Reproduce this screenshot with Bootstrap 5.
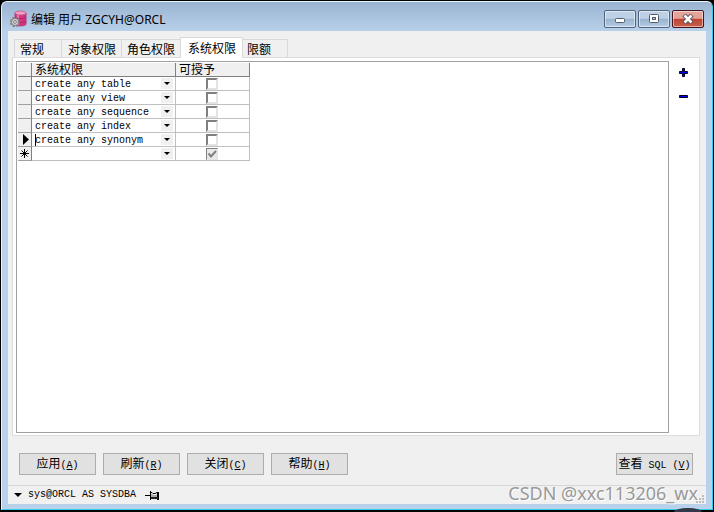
<!DOCTYPE html>
<html lang="zh-CN">
<head>
<meta charset="utf-8">
<meta name="viewport" content="width=device-width, initial-scale=1">
<title>编辑 用户 ZGCYH@ORCL</title>
<link href="https://cdn.jsdelivr.net/npm/bootstrap@5.3.0/dist/css/bootstrap.min.css" rel="stylesheet">
<style>
body{background:#000;color:#000;font:12px/14px "Liberation Sans","Noto Sans CJK SC",sans-serif}
button,select,input{font:inherit;color:#000}
.mono{font-family:"Liberation Mono",monospace;font-size:10px}
.window{margin:1px 1px 2px 1px;border:1px solid #e8f4fc;border-right-color:#32cdec;border-bottom-color:#32cdec;border-radius:6px 6px 0 0;background:linear-gradient(#9ab3d1,#b9d1ea 30px,#b9d1ea);padding:0 6px 5px}
.titlebar{height:29px;padding:4px 2px 0 2px}
.title-text{font:12px/16px "Noto Sans","Noto Sans CJK SC",sans-serif;padding-top:2px}
.win-buttons{gap:2px}
.win-btn{width:32px;height:18px;border:1px solid #52657d;border-radius:2px;box-shadow:inset 0 0 0 1px #ffffff80;background:linear-gradient(#bdd0e6 46%,#98b3d0 50%,#b5cce4)}
.win-close{border-color:#431422;background:linear-gradient(#e3a398 46%,#bd432f 50%,#c9604a)}
.client{background:#f0f0f0}
.tabs{padding:6px 0 0 6px;height:26px}
.tab{background:#f0f0f0;border:1px solid #d9d9d9;border-left-width:0;border-bottom:0;height:18px;padding:2px 5px 0 6px;line-height:16px;white-space:nowrap}
.tab.first{border-left-width:1px;padding:2px 17px 0 5px}
.tab.last{padding:2px 16px 0 4px}
.tab.narrow{padding-left:5px}
.tab.current{height:21px;background:#fff;border-left-width:1px;margin:0 0 -1px -1px;padding:2px 6px 0 7px;position:relative;z-index:1}
.panel{border:1px solid #dcdcdc;background:#fff;margin:0 6px 0 4px;padding:3px 0 2px 3px}
.grid-box{border:1px solid #a0a0a5;padding:1px}
.side{width:30px;padding:0 0 0 10px}
.side button{height:24px;width:14px}
.bare{border:0;background:none;padding:0}
.grid{border-collapse:separate;border-spacing:0;table-layout:fixed;width:232px}
.grid th,.grid td{height:14px;padding:0;border:solid #c0c0c0;border-width:0 1px 1px 0;font-weight:400;line-height:13px;overflow:hidden}
.grid .head th{border-color:#808080;background:#f0f0f0;padding:1px 0 0 3px;line-height:12px}
.grid .marker{background:#f0f0f0;border-right-color:#808080;border-bottom-color:#a0a0a0}
.grid svg{display:block}
.cell{padding-left:3px}
.combo{appearance:none;border:0;background:#fff;padding:2px 0 0;height:13px;line-height:11px;outline:0;min-width:0}
.drop{width:12px;height:11px;background:#f0f0f0;margin-right:2px}
.caret{width:1px;height:12px;background:#000;margin-right:-1px;z-index:1}
.check{appearance:none;display:block;margin:0 0 0 30px;width:12px;height:12px;border:2px solid;border-color:#808080 #e3e3e3 #e3e3e3 #808080;background:#fff}
.check:checked{border-width:1px;background:url("data:image/svg+xml,%3Csvg xmlns='http://www.w3.org/2000/svg' viewBox='0 0 10 10'%3E%3Crect width='10' height='10' fill='%23e8e8e8'/%3E%3Cpath d='M1.5 4.5 4 7.5 9 2' fill='none' stroke='%23808080' stroke-width='2'/%3E%3C/svg%3E")}
.actions{padding:17px 13px 10px 11px;gap:7px}
.act{width:77px;height:22px;border:1px solid #adadad;background:#e1e1e1;white-space:nowrap;padding:1px 0 0;line-height:19px}
.status{border-top:1px solid #d7d7d7;height:19px;padding-left:6px}
.status .mono{margin-left:2px}
.watermark{right:16px;bottom:9px;font:18px/20px "Noto Sans",sans-serif;color:#999;text-shadow:1px 1px 0 #fff;pointer-events:none}
.bubble{right:12px;bottom:0;width:28px;height:4px;border-radius:14px 14px 0 0/4px 4px 0 0;background:#30384a}
</style>
<script defer src="https://cdn.jsdelivr.net/npm/bootstrap@5.3.0/dist/js/bootstrap.bundle.min.js"></script>
</head>
<body class="vh-100 overflow-hidden d-flex flex-column position-relative">
<main class="window flex-grow-1 d-flex flex-column">
  <header class="titlebar d-flex align-items-center">
    <svg width="17" height="18" viewBox="0 0 17 18" class="me-1" aria-hidden="true">
      <path d="M5 3v11c0 2.500 11 2.500 11 0V3" fill="#d2347f" stroke="#b83574"/>
      <path d="M8 5v10" stroke="#f07fb0" stroke-width="2"/>
      <path d="M5 7c1 2 10 2 11 0M5 11c1 2 10 2 11 0" fill="none" stroke="#b3266a"/>
      <ellipse cx="10.500" cy="3" rx="5.500" ry="2" fill="#f0a0c4" stroke="#c95a8e"/>
      <circle cx="5" cy="12" r="4.300" fill="none" stroke="#777" stroke-width="1.500" stroke-dasharray="2 1.400"/>
      <circle cx="5" cy="12" r="3.500" fill="#d8d8d8" stroke="#808080"/><circle cx="5" cy="12" r="1.400" fill="#fff" stroke="#777"/>
    </svg>
    <h1 class="title-text m-0 me-auto">编辑 用户 ZGCYH@ORCL</h1>
    <div class="win-buttons d-flex">
      <button class="win-btn p-0 d-flex align-items-center justify-content-center" aria-label="最小化"><svg width="12" height="10"><rect x="1.5" y="4.500" width="9" height="4" rx="1" fill="#fff" stroke="#555c6b"/></svg></button>
      <button class="win-btn p-0 d-flex align-items-center justify-content-center" aria-label="最大化"><svg width="12" height="10"><rect x="1.500" y=".5" width="9" height="8" rx="1" fill="#fff" stroke="#555c6b"/><rect x="4.500" y="3.500" width="3" height="2" fill="#aec3dc" stroke="#555c6b"/></svg></button>
      <button class="win-btn win-close p-0 d-flex align-items-center justify-content-center" aria-label="关闭窗口"><svg width="12" height="10"><path d="M2 1 10 9M10 1 2 9" stroke="#59505b" stroke-width="4.500"/><path d="M2.500 1.500 9.500 8.500M9.500 1.500 2.500 8.500" stroke="#fff" stroke-width="2.500"/></svg></button>
    </div>
  </header>
  <div class="client flex-grow-1 d-flex flex-column">
    <div class="tabs d-flex align-items-end" role="tablist">
      <button class="tab first" role="tab">常规</button>
      <button class="tab" role="tab">对象权限</button>
      <button class="tab narrow" role="tab">角色权限</button>
      <button class="tab current" role="tab" aria-selected="true">系统权限</button>
      <button class="tab last" role="tab">限额</button>
    </div>
    <section class="panel flex-grow-1 d-flex">
      <div class="grid-box flex-grow-1">
        <table class="grid">
          <colgroup><col style="width:14px"><col style="width:144px"><col style="width:74px"></colgroup>
          <thead><tr class="head"><th></th><th>系统权限</th><th>可授予</th></tr></thead>
          <tbody>
            <tr><td class="marker"></td><td><div class="cell d-flex align-items-center"><select class="combo mono flex-grow-1" aria-label="系统权限 1"><option>create any table</option></select><svg class="drop" viewBox="0 0 12 11"><path d="M3 4h6L6 7z"/></svg></div></td><td><input type="checkbox" class="check" aria-label="可授予 1"></td></tr>
            <tr><td class="marker"></td><td><div class="cell d-flex align-items-center"><select class="combo mono flex-grow-1" aria-label="系统权限 2"><option>create any view</option></select><svg class="drop" viewBox="0 0 12 11"><path d="M3 4h6L6 7z"/></svg></div></td><td><input type="checkbox" class="check" aria-label="可授予 2"></td></tr>
            <tr><td class="marker"></td><td><div class="cell d-flex align-items-center"><select class="combo mono flex-grow-1" aria-label="系统权限 3"><option>create any sequence</option></select><svg class="drop" viewBox="0 0 12 11"><path d="M3 4h6L6 7z"/></svg></div></td><td><input type="checkbox" class="check" aria-label="可授予 3"></td></tr>
            <tr><td class="marker"></td><td><div class="cell d-flex align-items-center"><select class="combo mono flex-grow-1" aria-label="系统权限 4"><option>create any index</option></select><svg class="drop" viewBox="0 0 12 11"><path d="M3 4h6L6 7z"/></svg></div></td><td><input type="checkbox" class="check" aria-label="可授予 4"></td></tr>
            <tr><td class="marker"><svg width="13" height="13"><path d="M5 1v11l6-5.500z"/></svg></td><td><div class="cell d-flex align-items-center"><span class="caret"></span><select class="combo mono flex-grow-1" aria-label="系统权限 5"><option>create any synonym</option></select><svg class="drop" viewBox="0 0 12 11"><path d="M3 4h6L6 7z"/></svg></div></td><td><input type="checkbox" class="check" aria-label="可授予 5"></td></tr>
            <tr><td class="marker"><svg width="13" height="13"><path d="M6.500 2v9M2 6.500h9M3.500 3.500l6 6M9.500 3.500l-6 6" stroke="#000"/></svg></td><td><div class="cell d-flex align-items-center"><select class="combo mono flex-grow-1" aria-label="新系统权限"><option></option></select><svg class="drop" viewBox="0 0 12 11"><path d="M3 4h6L6 7z"/></svg></div></td><td><input type="checkbox" class="check" aria-label="可授予 新行" checked disabled></td></tr>
          </tbody>
        </table>
      </div>
      <div class="side d-flex flex-column">
        <button class="bare" aria-label="添加"><svg width="10" height="10" class="d-block"><path d="M3.500.5h2v3h3v2h-3v3h-2v-3h-3v-2h3z" fill="#00f" stroke="#000020"/></svg></button>
        <button class="bare" aria-label="删除"><svg width="10" height="10" class="d-block"><path d="M.5 3.500h8v2h-8z" fill="#00f" stroke="#000020"/></svg></button>
      </div>
    </section>
    <div class="actions d-flex">
      <button class="act">应用<span class="mono">(<u>A</u>)</span></button>
      <button class="act">刷新<span class="mono">(<u>R</u>)</span></button>
      <button class="act">关闭<span class="mono">(<u>C</u>)</span></button>
      <button class="act me-auto">帮助<span class="mono">(<u>H</u>)</span></button>
      <button class="act">查看<span class="mono"> SQL (<u>V</u>)</span></button>
    </div>
    <footer class="status d-flex align-items-center">
      <svg width="8" height="5" class="me-1"><path d="M0 0h8L4 4z"/></svg>
      <span class="mono">sys@ORCL AS SYSDBA</span>
      <svg width="16" height="11" class="ms-2" aria-hidden="true"><path d="M7 4h1l2 1h2l1-1v4H7z" fill="#aaa"/><path d="M1 5.500h5M6.500 1v9M7 2.500h1l1 1h2l2-1M13.500 2v8M14.500 2v8" fill="none" stroke="#000"/><path d="M7 8h7" stroke="#222" stroke-width="2"/></svg>
      <svg width="10" height="10" class="ms-auto align-self-end" aria-hidden="true"><path d="M6 1h2v2H6zM3 4h2v2H3zM6 4h2v2H6zM0 7h2v2H0zM3 7h2v2H3zM6 7h2v2H6z" fill="#bcbcbc"/></svg>
    </footer>
  </div>
</main>
<div class="watermark position-absolute">CSDN @xxc113206_wx</div>
<div class="bubble position-absolute"></div>
</body>
</html>
